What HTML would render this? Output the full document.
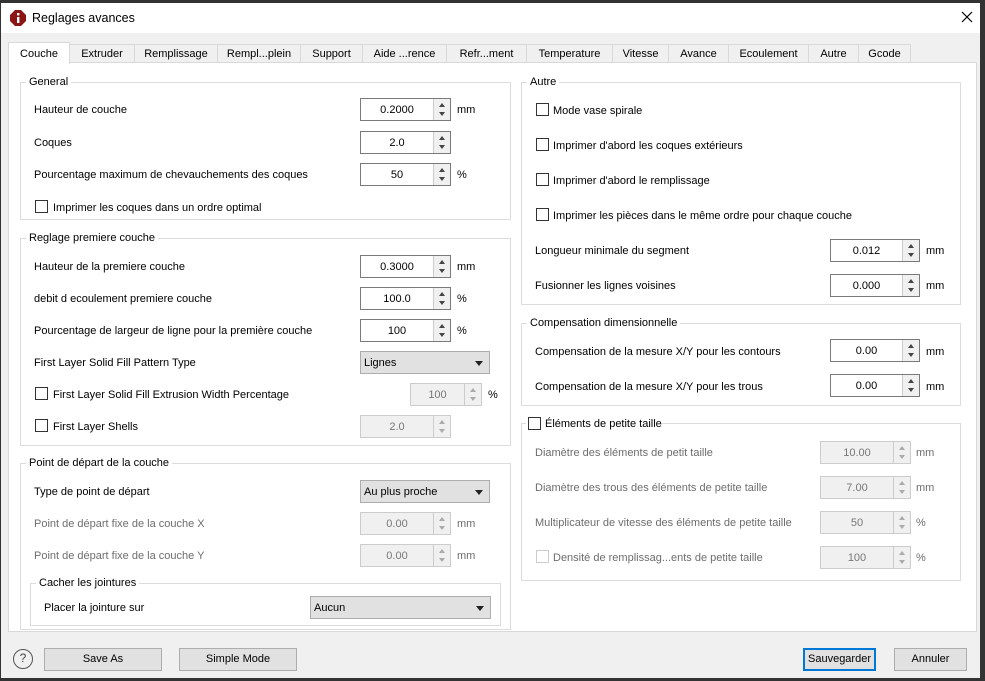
<!DOCTYPE html>
<html><head><meta charset="utf-8"><style>
*{box-sizing:border-box;margin:0;padding:0}
body{width:985px;height:681px;overflow:hidden;background:#2b2b2b;font-family:"Liberation Sans",sans-serif;font-size:11px;color:#000;position:relative}
.a{position:absolute;white-space:nowrap}
#win{position:absolute;left:1px;top:3px;width:979px;height:675px;background:#f0f0f0}
#title{position:absolute;left:0;top:0;width:979px;height:30px;background:#fff}
.tab{position:absolute;top:44px;height:19px;border:1px solid #d9d9d9;border-bottom:none;background:#f0f0f0;text-align:center;line-height:19px}
.pane{position:absolute;left:8px;top:62px;width:969px;height:570px;background:#fff;border:1px solid #d9d9d9}
.grp{position:absolute;border:1px solid #dcdcdc}
.gt{position:absolute;background:#fff;padding:0 3px;top:-8px;left:5px;line-height:15px}
.sp{position:absolute;height:23px;border:1px solid #7a7a7a;background:#fff;text-align:center;line-height:23px}
.sp .v{position:absolute;left:0;right:17px;top:0;text-align:center}
.sp .ar{position:absolute;right:0;top:0;width:17px;height:21px;border-left:1px solid #ccc;background:#f0f0f0}
.sp .ar:before{content:"";position:absolute;left:5px;top:4px;border:3px solid transparent;border-bottom:4px solid #444;border-top:none}
.sp .ar:after{content:"";position:absolute;left:5px;top:13px;border:3px solid transparent;border-top:4px solid #444;border-bottom:none}
.sp.d{border-color:#ccc;background:#f0f0f0;color:#777}
.sp.d .ar:before{border-bottom-color:#aaa}.sp.d .ar:after{border-top-color:#aaa}
.cb{position:absolute;width:13px;height:13px;border:1px solid #333;background:#fff}
.cb.d{border-color:#ccc}
.dd{position:absolute;height:23px;border:1px solid #adadad;background:#e1e1e1;padding-left:3px;line-height:23px}
.dd:after{content:"";position:absolute;right:6px;top:9px;border:4px solid transparent;border-top:5px solid #222;border-bottom:none}
.g{color:#6d6d6d}
.btn{position:absolute;top:648px;height:23px;border:1px solid #adadad;background:#e1e1e1;text-align:center;line-height:21px}
.t{margin-top:1px}
</style></head><body>
<div class="a" style="left:0;top:0;width:985px;height:3px;background:#333"></div>
<div id="win">
<div id="title">
<svg class="a" style="left:9px;top:7px" width="16" height="16" viewBox="0 0 16 16"><polygon points="5,0 11,0 16,5 16,11 11,16 5,16 0,11 0,5" fill="#8b1515"/><rect x="7" y="3" width="2.4" height="2.4" fill="#fff"/><rect x="7" y="7" width="2.4" height="6" fill="#fff"/></svg>
<div class="a" style="left:31px;top:8px;font-size:12.5px">Reglages avances</div>
<svg class="a" style="left:960px;top:8px" width="12" height="12" viewBox="0 0 12 12"><path d="M1 1L11 11M11 1L1 11" stroke="#000" stroke-width="1.2"/></svg>
</div>
</div>
<div class="tab" style="left:69px;width:66px">Extruder</div>
<div class="tab" style="left:134px;width:84px">Remplissage</div>
<div class="tab" style="left:217px;width:84px">Rempl...plein</div>
<div class="tab" style="left:300px;width:63px">Support</div>
<div class="tab" style="left:362px;width:85px">Aide ...rence</div>
<div class="tab" style="left:446px;width:81px">Refr...ment</div>
<div class="tab" style="left:526px;width:87px">Temperature</div>
<div class="tab" style="left:612px;width:57px">Vitesse</div>
<div class="tab" style="left:668px;width:61px">Avance</div>
<div class="tab" style="left:728px;width:81px">Ecoulement</div>
<div class="tab" style="left:808px;width:51px">Autre</div>
<div class="tab" style="left:858px;width:53px">Gcode</div>
<div class="pane"></div>
<div class="tab" style="left:8px;top:42px;width:62px;height:22px;background:#fff;line-height:22px;z-index:2">Couche</div>

<div class="grp" style="left:20px;top:82px;width:491px;height:138px"><div class="gt">General</div></div>
<div class="a" style="left:34px;top:104px">Hauteur de couche</div>
<div class="sp" style="left:360px;top:98px;width:91px"><span class="v">0.2000</span><span class="ar"></span></div><div class="a" style="left:457px;top:104px">mm</div>
<div class="a" style="left:34px;top:137px">Coques</div>
<div class="sp" style="left:360px;top:131px;width:91px"><span class="v">2.0</span><span class="ar"></span></div>
<div class="a" style="left:34px;top:169px">Pourcentage maximum de chevauchements des coques</div>
<div class="sp" style="left:360px;top:163px;width:91px"><span class="v">50</span><span class="ar"></span></div><div class="a" style="left:457px;top:169px">%</div>
<div class="cb" style="left:35px;top:200px"></div><div class="a" style="left:53px;top:202px">Imprimer les coques dans un ordre optimal</div>

<div class="grp" style="left:20px;top:238px;width:491px;height:208px"><div class="gt">Reglage premiere couche</div></div>
<div class="a" style="left:34px;top:261px">Hauteur de la premiere couche</div>
<div class="sp" style="left:360px;top:255px;width:91px"><span class="v">0.3000</span><span class="ar"></span></div><div class="a" style="left:457px;top:261px">mm</div>
<div class="a" style="left:34px;top:293px">debit d ecoulement premiere couche</div>
<div class="sp" style="left:360px;top:287px;width:91px"><span class="v">100.0</span><span class="ar"></span></div><div class="a" style="left:457px;top:293px">%</div>
<div class="a" style="left:34px;top:325px">Pourcentage de largeur de ligne pour la première couche</div>
<div class="sp" style="left:360px;top:319px;width:91px"><span class="v">100</span><span class="ar"></span></div><div class="a" style="left:457px;top:325px">%</div>
<div class="a" style="left:34px;top:357px">First Layer Solid Fill Pattern Type</div>
<div class="dd" style="left:360px;top:351px;width:130px">Lignes</div>
<div class="cb" style="left:35px;top:387px"></div><div class="a" style="left:53px;top:389px">First Layer Solid Fill Extrusion Width Percentage</div>
<div class="sp d" style="left:410px;top:383px;width:72px"><span class="v">100</span><span class="ar"></span></div><div class="a" style="left:488px;top:389px">%</div>
<div class="cb" style="left:35px;top:419px"></div><div class="a" style="left:53px;top:421px">First Layer Shells</div>
<div class="sp d" style="left:360px;top:415px;width:91px"><span class="v">2.0</span><span class="ar"></span></div>

<div class="grp" style="left:20px;top:463px;width:491px;height:167px"><div class="gt">Point de départ de la couche</div></div>
<div class="a" style="left:34px;top:486px">Type de point de départ</div>
<div class="dd" style="left:360px;top:480px;width:130px">Au plus proche</div>
<div class="a g" style="left:34px;top:518px">Point de départ fixe de la couche X</div>
<div class="sp d" style="left:360px;top:512px;width:91px"><span class="v">0.00</span><span class="ar"></span></div><div class="a g" style="left:457px;top:518px">mm</div>
<div class="a g" style="left:34px;top:550px">Point de départ fixe de la couche Y</div>
<div class="sp d" style="left:360px;top:544px;width:91px"><span class="v">0.00</span><span class="ar"></span></div><div class="a g" style="left:457px;top:550px">mm</div>
<div class="grp" style="left:30px;top:583px;width:471px;height:43px"><div class="gt">Cacher les jointures</div></div>
<div class="a" style="left:44px;top:602px">Placer la jointure sur</div>
<div class="dd" style="left:310px;top:596px;width:181px">Aucun</div>

<div class="grp" style="left:521px;top:82px;width:440px;height:223px"><div class="gt">Autre</div></div>
<div class="cb" style="left:536px;top:103px"></div><div class="a" style="left:553px;top:105px">Mode vase spirale</div>
<div class="cb" style="left:536px;top:138px"></div><div class="a" style="left:553px;top:140px">Imprimer d'abord les coques extérieurs</div>
<div class="cb" style="left:536px;top:173px"></div><div class="a" style="left:553px;top:175px">Imprimer d'abord le remplissage</div>
<div class="cb" style="left:536px;top:208px"></div><div class="a" style="left:553px;top:210px">Imprimer les pièces dans le même ordre pour chaque couche</div>
<div class="a" style="left:535px;top:245px">Longueur minimale du segment</div>
<div class="sp" style="left:830px;top:239px;width:90px"><span class="v">0.012</span><span class="ar"></span></div><div class="a" style="left:926px;top:245px">mm</div>
<div class="a" style="left:535px;top:280px">Fusionner les lignes voisines</div>
<div class="sp" style="left:830px;top:274px;width:90px"><span class="v">0.000</span><span class="ar"></span></div><div class="a" style="left:926px;top:280px">mm</div>

<div class="grp" style="left:521px;top:323px;width:440px;height:83px"><div class="gt">Compensation dimensionnelle</div></div>
<div class="a" style="left:535px;top:346px">Compensation de la mesure X/Y pour les contours</div>
<div class="sp" style="left:830px;top:339px;width:90px"><span class="v">0.00</span><span class="ar"></span></div><div class="a" style="left:926px;top:346px">mm</div>
<div class="a" style="left:535px;top:381px">Compensation de la mesure X/Y pour les trous</div>
<div class="sp" style="left:830px;top:374px;width:90px"><span class="v">0.00</span><span class="ar"></span></div><div class="a" style="left:926px;top:381px">mm</div>

<div class="grp" style="left:521px;top:423px;width:440px;height:158px"></div>
<div class="a" style="left:526px;top:416px;width:136px;height:14px;background:#fff"></div>
<div class="cb" style="left:528px;top:417px"></div><div class="a" style="left:545px;top:418px">Éléments de petite taille</div>
<div class="a g" style="left:535px;top:447px">Diamètre des éléments de petit taille</div>
<div class="sp d" style="left:820px;top:441px;width:91px"><span class="v">10.00</span><span class="ar"></span></div><div class="a g" style="left:916px;top:447px">mm</div>
<div class="a g" style="left:535px;top:482px">Diamètre des trous des éléments de petite taille</div>
<div class="sp d" style="left:820px;top:476px;width:91px"><span class="v">7.00</span><span class="ar"></span></div><div class="a g" style="left:916px;top:482px">mm</div>
<div class="a g" style="left:535px;top:517px">Multiplicateur de vitesse des éléments de petite taille</div>
<div class="sp d" style="left:820px;top:511px;width:91px"><span class="v">50</span><span class="ar"></span></div><div class="a g" style="left:916px;top:517px">%</div>
<div class="cb d" style="left:536px;top:550px"></div><div class="a g" style="left:553px;top:552px">Densité de remplissag...ents de petite taille</div>
<div class="sp d" style="left:820px;top:546px;width:91px"><span class="v">100</span><span class="ar"></span></div><div class="a g" style="left:916px;top:552px">%</div>

<div class="a" style="left:13px;top:649px;width:20px;height:20px;border:1.5px solid #555;border-radius:50%;text-align:center;line-height:17px;font-size:12px;color:#444">?</div>
<div class="btn" style="left:44px;width:118px">Save As</div>
<div class="btn" style="left:179px;width:118px">Simple Mode</div>
<div class="btn" style="left:803px;width:73px;border:2px solid #0078d7;line-height:19px">Sauvegarder</div>
<div class="btn" style="left:894px;width:73px">Annuler</div>
<div class="a" style="left:0;top:678px;width:985px;height:3px;background:#333"></div>
<div class="a" style="left:980px;top:0;width:5px;height:681px;background:#333"></div>
<div class="a" style="left:0;top:0;width:1px;height:681px;background:#333"></div>
</body></html>
